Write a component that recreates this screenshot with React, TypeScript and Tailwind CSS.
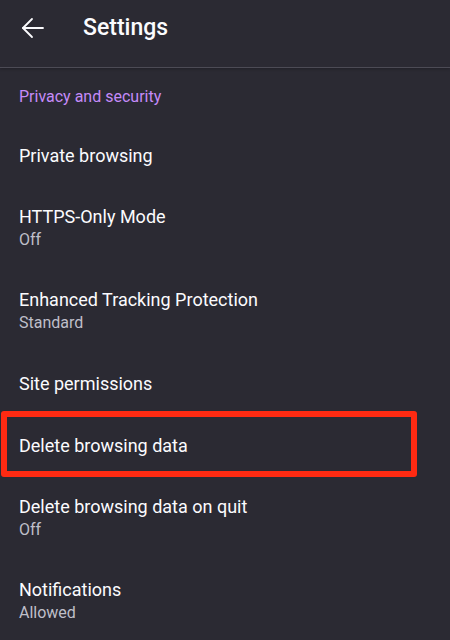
import React from 'react';

type Item = { title: string; sub?: string; highlight?: boolean };

const items: Item[] = [
  { title: 'Private browsing' },
  { title: 'HTTPS-Only Mode', sub: 'Off' },
  { title: 'Enhanced Tracking Protection', sub: 'Standard' },
  { title: 'Site permissions' },
  { title: 'Delete browsing data', highlight: true },
  { title: 'Delete browsing data on quit', sub: 'Off' },
  { title: 'Notifications', sub: 'Allowed' },
];

const App: React.FC = () => {
  return (
    <div
      className="w-[450px] h-[640px] overflow-hidden bg-[#2b2a33] text-[#fbfbfe]"
      style={{ fontFamily: 'Roboto, "Liberation Sans", sans-serif' }}
    >
      {/* top bar */}
      <div className="h-[68px] flex items-center border-b border-[#4c4b55] shadow-[0_1px_3px_rgba(0,0,0,0.25)]">
        <div className="w-[83px] flex items-center pl-[21px] -mt-[11px]">
          <svg width="24" height="22" viewBox="0 0 24 22" fill="none" stroke="#fbfbfe" strokeWidth="1.8" strokeLinecap="round" strokeLinejoin="round">
            <path d="M22 11H2" />
            <path d="M11 2L2 11L11 20" />
          </svg>
        </div>
        <h1 className="text-[23px] font-medium leading-none -mt-[12px]">Settings</h1>
      </div>

      {/* category */}
      <div className="h-[57px] flex items-center px-[19px]">
        <span className="text-[16px] text-[#c58af9]">Privacy and security</span>
      </div>

      {items.map((it) => (
        <div
          key={it.title}
          className={`relative flex flex-col justify-center px-[19px] ${it.sub ? 'h-[83px]' : 'h-[62px]'}`}
        >
          <span className="text-[18px] leading-[22px]">{it.title}</span>
          {it.sub && <span className="text-[16px] leading-[23px] text-[#bfbfc9]">{it.sub}</span>}
          {it.highlight && (
            <div className="absolute left-[1px] top-[-4px] w-[416px] h-[66px] border-[6px] border-[#ff2a12] rounded-[3px]" />
          )}
        </div>
      ))}
    </div>
  );
};

export default App;
